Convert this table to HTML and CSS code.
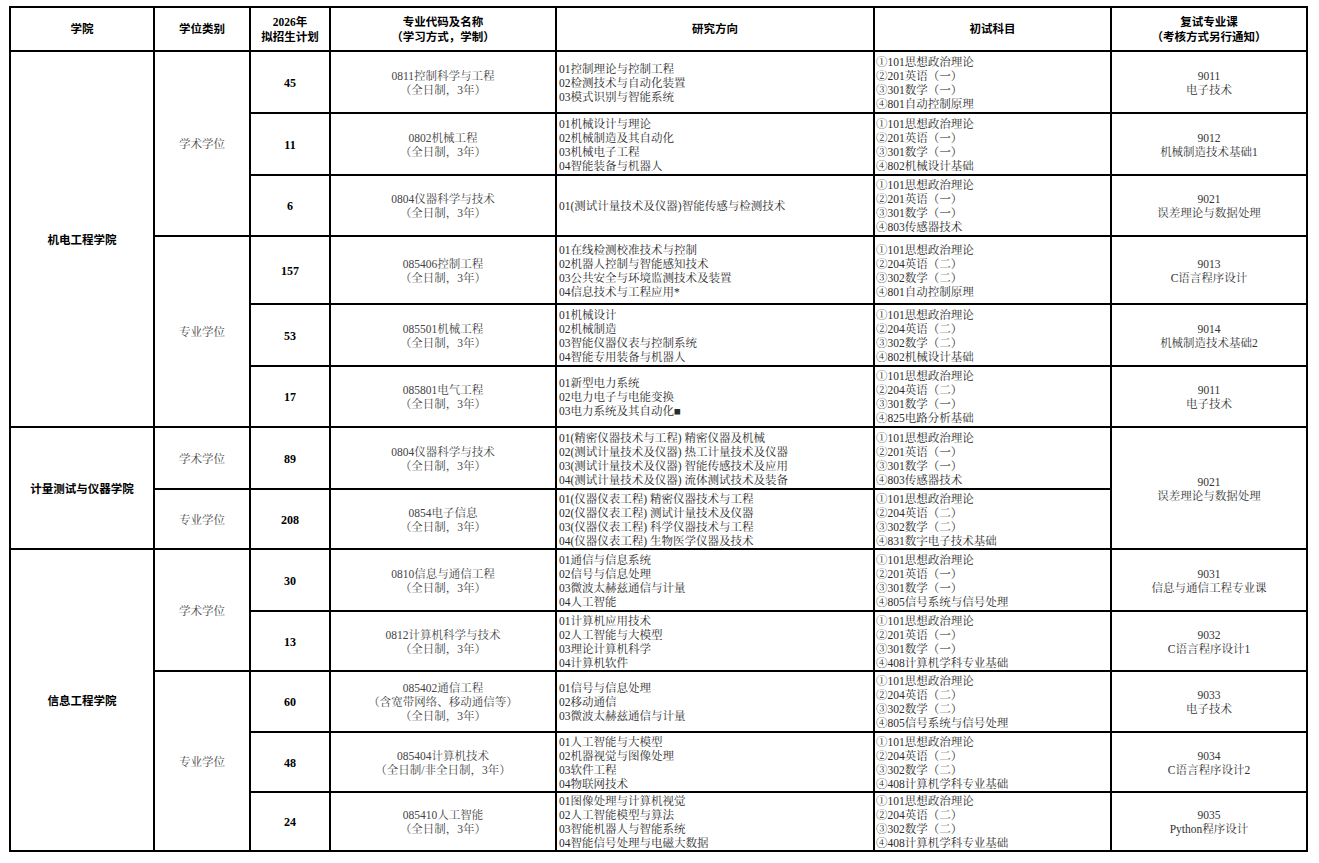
FILE: index.html
```html
<!DOCTYPE html>
<html lang="zh-CN">
<head>
<meta charset="utf-8">
<title>2026年招生计划</title>
<link rel="stylesheet" href="styles.css">
</head>
<body>
<table class="plan">
  <colgroup>
    <col class="c1"><col class="c2"><col class="c3"><col class="c4"><col class="c5"><col class="c6"><col class="c7">
  </colgroup>
  <thead>
    <tr class="r44">
      <th>学院</th>
      <th>学位类别</th>
      <th>2026年<br>拟招生计划</th>
      <th>专业代码及名称<br>（学习方式，学制）</th>
      <th>研究方向</th>
      <th>初试科目</th>
      <th>复试专业课<br>（考核方式另行通知）</th>
    </tr>
  </thead>
  <tbody>
    <tr class="r62">
      <td class="college" rowspan="6">机电工程学院</td>
      <td class="degree" rowspan="3">学术学位</td>
      <td class="num">45</td>
      <td class="major">0811控制科学与工程<br>（全日制，3年）</td>
      <td class="dir">01控制理论与控制工程<br>02检测技术与自动化装置<br>03模式识别与智能系统</td>
      <td class="exam">①101思想政治理论<br>②201英语（一）<br>③301数学（一）<br>④801自动控制原理</td>
      <td class="retest">9011<br>电子技术</td>
    </tr>
    <tr class="r62">
      <td class="num">11</td>
      <td class="major">0802机械工程<br>（全日制，3年）</td>
      <td class="dir">01机械设计与理论<br>02机械制造及其自动化<br>03机械电子工程<br>04智能装备与机器人</td>
      <td class="exam">①101思想政治理论<br>②201英语（一）<br>③301数学（一）<br>④802机械设计基础</td>
      <td class="retest">9012<br>机械制造技术基础1</td>
    </tr>
    <tr class="r61">
      <td class="num">6</td>
      <td class="major">0804仪器科学与技术<br>（全日制，3年）</td>
      <td class="dir">01(测试计量技术及仪器)智能传感与检测技术</td>
      <td class="exam">①101思想政治理论<br>②201英语（一）<br>③301数学（一）<br>④803传感器技术</td>
      <td class="retest">9021<br>误差理论与数据处理</td>
    </tr>
    <tr class="r68">
      <td class="degree" rowspan="3">专业学位</td>
      <td class="num">157</td>
      <td class="major">085406控制工程<br>（全日制，3年）</td>
      <td class="dir">01在线检测校准技术与控制<br>02机器人控制与智能感知技术<br>03公共安全与环境监测技术及装置<br>04信息技术与工程应用*</td>
      <td class="exam">①101思想政治理论<br>②204英语（二）<br>③302数学（二）<br>④801自动控制原理</td>
      <td class="retest">9013<br>C语言程序设计</td>
    </tr>
    <tr class="r62">
      <td class="num">53</td>
      <td class="major">085501机械工程<br>（全日制，3年）</td>
      <td class="dir">01机械设计<br>02机械制造<br>03智能仪器仪表与控制系统<br>04智能专用装备与机器人</td>
      <td class="exam">①101思想政治理论<br>②204英语（二）<br>③302数学（二）<br>④802机械设计基础</td>
      <td class="retest">9014<br>机械制造技术基础2</td>
    </tr>
    <tr class="r61">
      <td class="num">17</td>
      <td class="major">085801电气工程<br>（全日制，3年）</td>
      <td class="dir">01新型电力系统<br>02电力电子与电能变换<br>03电力系统及其自动化■</td>
      <td class="exam">①101思想政治理论<br>②204英语（二）<br>③301数学（一）<br>④825电路分析基础</td>
      <td class="retest">9011<br>电子技术</td>
    </tr>
    <tr class="r62">
      <td class="college" rowspan="2">计量测试与仪器学院</td>
      <td class="degree">学术学位</td>
      <td class="num">89</td>
      <td class="major">0804仪器科学与技术<br>（全日制，3年）</td>
      <td class="dir">01(精密仪器技术与工程) 精密仪器及机械<br>02(测试计量技术及仪器) 热工计量技术及仪器<br>03(测试计量技术及仪器) 智能传感技术及应用<br>04(测试计量技术及仪器) 流体测试技术及装备</td>
      <td class="exam">①101思想政治理论<br>②201英语（一）<br>③301数学（一）<br>④803传感器技术</td>
      <td class="retest" rowspan="2">9021<br>误差理论与数据处理</td>
    </tr>
    <tr class="r60">
      <td class="degree">专业学位</td>
      <td class="num">208</td>
      <td class="major">0854电子信息<br>（全日制，3年）</td>
      <td class="dir">01(仪器仪表工程) 精密仪器技术与工程<br>02(仪器仪表工程) 测试计量技术及仪器<br>03(仪器仪表工程) 科学仪器技术与工程<br>04(仪器仪表工程) 生物医学仪器及技术</td>
      <td class="exam">①101思想政治理论<br>②204英语（二）<br>③302数学（二）<br>④831数字电子技术基础</td>
    </tr>
    <tr class="r62">
      <td class="college" rowspan="5">信息工程学院</td>
      <td class="degree" rowspan="2">学术学位</td>
      <td class="num">30</td>
      <td class="major">0810信息与通信工程<br>（全日制，3年）</td>
      <td class="dir">01通信与信息系统<br>02信号与信息处理<br>03微波太赫兹通信与计量<br>04人工智能</td>
      <td class="exam">①101思想政治理论<br>②201英语（一）<br>③301数学（一）<br>④805信号系统与信号处理</td>
      <td class="retest">9031<br>信息与通信工程专业课</td>
    </tr>
    <tr class="r60">
      <td class="num">13</td>
      <td class="major">0812计算机科学与技术<br>（全日制，3年）</td>
      <td class="dir">01计算机应用技术<br>02人工智能与大模型<br>03理论计算机科学<br>04计算机软件</td>
      <td class="exam">①101思想政治理论<br>②201英语（一）<br>③301数学（一）<br>④408计算机学科专业基础</td>
      <td class="retest">9032<br>C语言程序设计1</td>
    </tr>
    <tr class="r61">
      <td class="degree" rowspan="3">专业学位</td>
      <td class="num">60</td>
      <td class="major">085402通信工程<br>（含宽带网络、移动通信等）<br>（全日制，3年）</td>
      <td class="dir">01信号与信息处理<br>02移动通信<br>03微波太赫兹通信与计量</td>
      <td class="exam">①101思想政治理论<br>②204英语（二）<br>③302数学（二）<br>④805信号系统与信号处理</td>
      <td class="retest">9033<br>电子技术</td>
    </tr>
    <tr class="r60">
      <td class="num">48</td>
      <td class="major">085404计算机技术<br>（全日制/非全日制，3年）</td>
      <td class="dir">01人工智能与大模型<br>02机器视觉与图像处理<br>03软件工程<br>04物联网技术</td>
      <td class="exam">①101思想政治理论<br>②204英语（二）<br>③302数学（二）<br>④408计算机学科专业基础</td>
      <td class="retest">9034<br>C语言程序设计2</td>
    </tr>
    <tr class="r59">
      <td class="num">24</td>
      <td class="major">085410人工智能<br>（全日制，3年）</td>
      <td class="dir">01图像处理与计算机视觉<br>02人工智能模型与算法<br>03智能机器人与智能系统<br>04智能信号处理与电磁大数据</td>
      <td class="exam">①101思想政治理论<br>②204英语（二）<br>③302数学（二）<br>④408计算机学科专业基础</td>
      <td class="retest">9035<br>Python程序设计</td>
    </tr>
  </tbody>
</table>
</body>
</html>
```
FILE: styles.css
```css
html, body {
  margin: 0;
  padding: 0;
  background: #ffffff;
}

body {
  padding: 6px 0 0 9px;
  font-family: "Liberation Serif", "Noto Serif CJK SC", "Noto Sans CJK SC", serif;
  font-size: 11.5px;
  color: #2b2b2b;
}

.plan {
  border-collapse: collapse;
  table-layout: fixed;
  width: 1297px;
  border: 2px solid #000;
}

.c1 { width: 144px; }
.c2 { width: 96px; }
.c3 { width: 80px; }
.c4 { width: 226px; }
.c5 { width: 318px; }
.c6 { width: 237px; }
.c7 { width: 196px; }

.plan th,
.plan td {
  border: 2px solid #000;
  padding: 1px 2px 0;
  line-height: 14px;
  vertical-align: middle;
  text-align: center;
  overflow: hidden;
}

.plan th {
  font-family: "Liberation Serif", "Noto Sans CJK SC", sans-serif;
  font-weight: 700;
  color: #000;
  font-size: 11.5px;
  line-height: 14.5px;
}

.r44 { height: 44px; }
.r59 { height: 59px; }
.r60 { height: 60px; }
.r61 { height: 61px; }
.r62 { height: 62px; }
.r68 { height: 68px; }

.plan td.college {
  font-family: "Liberation Serif", "Noto Sans CJK SC", sans-serif;
  font-weight: 700;
  color: #000;
}

.plan td.degree {
  color: #444;
}

.plan td.num {
  font-family: "Liberation Serif", "Noto Sans CJK SC", serif;
  font-weight: 700;
  color: #000;
  font-size: 12px;
}

.plan td.major {
  color: #444;
}

.plan td.dir,
.plan td.exam {
  text-align: left;
  white-space: nowrap;
}

.plan td.dir {
  padding-left: 2px;
}

.plan td.exam {
  padding-left: 1px;
}

.plan td.retest {
  color: #333;
}
```
